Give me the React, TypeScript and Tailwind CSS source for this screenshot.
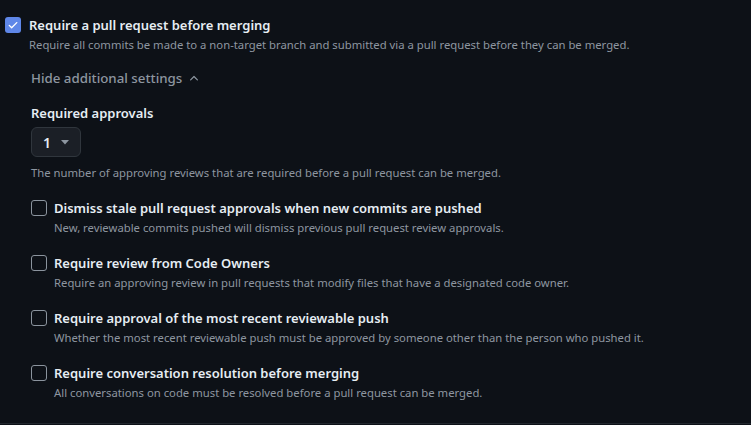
import React from "react";

const font = { fontFamily: '"Noto Sans", "Segoe UI", sans-serif' };

function Box({ checked }: { checked?: boolean }) {
  if (checked) {
    return (
      <span className="flex h-4 w-4 shrink-0 items-center justify-center rounded-[3px] bg-[#5f87e8]">
        <svg width="12" height="12" viewBox="0 0 16 16" fill="none">
          <path d="M3 8.5l3.2 3.2L13 4.8" stroke="#fff" strokeWidth="1.8" strokeLinecap="round" strokeLinejoin="round" />
        </svg>
      </span>
    );
  }
  return <span className="block h-4 w-4 shrink-0 rounded-[3px] border border-[#8b949e] bg-[#0d1117]" />;
}

function Row({ title, desc }: { title: string; desc: string }) {
  return (
    <div className="flex gap-[7px]">
      <div className="pt-[2px]">
        <Box />
      </div>
      <div className="flex flex-col">
        <div className="text-[13px] font-semibold leading-5 text-[#e6edf3]">{title}</div>
        <div className="mt-[1px] text-[11.3px] leading-[18px] text-[#8d96a0]">{desc}</div>
      </div>
    </div>
  );
}

export default function App() {
  return (
    <div className="h-[425px] w-[751px] overflow-hidden bg-[#0d1117]" style={font}>
      <div className="flex h-[424px] flex-col border-b border-[#21262d] pl-[5px] pt-[15px]">
        <div className="flex gap-2">
          <div className="pt-[2px]">
            <Box checked />
          </div>
          <div className="flex flex-col">
            <div className="text-[13px] font-semibold leading-5 text-[#e6edf3]">Require a pull request before merging</div>
            <div className="mt-[1px] text-[11.3px] leading-[18px] text-[#8d96a0]">
              Require all commits be made to a non-target branch and submitted via a pull request before they can be merged.
            </div>
          </div>
        </div>
        <div className="pl-[26px]">
          <div className="mt-[14px] flex items-center gap-[6px] text-[13.3px] font-medium leading-5 text-[#8d96a0]">
            Hide additional settings
            <svg width="12" height="12" viewBox="0 0 16 16" fill="none">
              <path d="M3.5 10.5L8 6l4.5 4.5" stroke="#8d96a0" strokeWidth="1.6" strokeLinecap="round" strokeLinejoin="round" />
            </svg>
          </div>
          <div className="mt-[15px] text-[13px] font-semibold leading-5 text-[#e6edf3]">Required approvals</div>
          <div className="mt-[4px] flex h-[30px] w-[50px] items-center gap-[10px] rounded-md border border-[#30363d] bg-[#1b1f26] pl-[11px]">
            <span className="text-[14px] font-semibold text-[#e6edf3]">1</span>
            <svg width="8" height="5" viewBox="0 0 8 5">
              <path d="M0 0h8L4 4.5z" fill="#8d96a0" />
            </svg>
          </div>
          <div className="mt-[7px] text-[11.3px] leading-[18px] text-[#8d96a0]">
            The number of approving reviews that are required before a pull request can be merged.
          </div>
          <div className="mt-[16px] flex flex-col gap-[16px]">
            <Row
              title="Dismiss stale pull request approvals when new commits are pushed"
              desc="New, reviewable commits pushed will dismiss previous pull request review approvals."
            />
            <Row
              title="Require review from Code Owners"
              desc="Require an approving review in pull requests that modify files that have a designated code owner."
            />
            <Row
              title="Require approval of the most recent reviewable push"
              desc="Whether the most recent reviewable push must be approved by someone other than the person who pushed it."
            />
            <Row
              title="Require conversation resolution before merging"
              desc="All conversations on code must be resolved before a pull request can be merged."
            />
          </div>
        </div>
      </div>
    </div>
  );
}
